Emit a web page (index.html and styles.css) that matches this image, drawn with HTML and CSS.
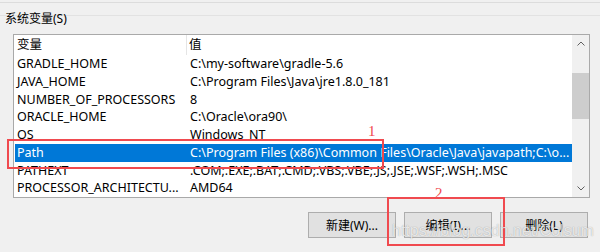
FILE: index.html
```html
<!DOCTYPE html>
<html lang="zh-CN">
<head>
    <meta charset="UTF-8">
    <title>系统变量</title>
    <link rel="stylesheet" href="styles.css">
</head>
<body>
    <div class="window">
        <div class="group">
            <div class="group-title">系统变量(S)</div>

            <div class="listbox">
                <div class="list">
                    <div class="row head">
                        <div class="cell name">变量</div>
                        <div class="cell value">值</div>
                    </div>
                    <div class="row">
                        <div class="cell name">GRADLE_HOME</div>
                        <div class="cell value">C:\my-software\gradle-5.6</div>
                    </div>
                    <div class="row">
                        <div class="cell name">JAVA_HOME</div>
                        <div class="cell value">C:\Program Files\Java\jre1.8.0_181</div>
                    </div>
                    <div class="row">
                        <div class="cell name">NUMBER_OF_PROCESSORS</div>
                        <div class="cell value">8</div>
                    </div>
                    <div class="row">
                        <div class="cell name">ORACLE_HOME</div>
                        <div class="cell value">C:\Oracle\ora90\</div>
                    </div>
                    <div class="row">
                        <div class="cell name">OS</div>
                        <div class="cell value">Windows_NT</div>
                    </div>
                    <div class="row selected">
                        <div class="cell name">Path</div>
                        <div class="cell value">C:\Program Files (x86)\Common Files\Oracle\Java\javapath;C:\o...</div>
                    </div>
                    <div class="row">
                        <div class="cell name">PATHEXT</div>
                        <div class="cell value">.COM;.EXE;.BAT;.CMD;.VBS;.VBE;.JS;.JSE;.WSF;.WSH;.MSC</div>
                    </div>
                    <div class="row">
                        <div class="cell name">PROCESSOR_ARCHITECTU...</div>
                        <div class="cell value">AMD64</div>
                    </div>
                </div>

                <div class="scrollbar">
                    <div class="scroll-btn">
                        <svg width="8" height="5" viewBox="0 0 8 5"><path d="M0.5 4.5 L4 1 L7.5 4.5" fill="none" stroke="#606060" stroke-width="1"/></svg>
                    </div>
                    <div class="scroll-track">
                        <div class="scroll-thumb"></div>
                    </div>
                    <div class="scroll-btn">
                        <svg width="8" height="5" viewBox="0 0 8 5"><path d="M0.5 0.5 L4 4 L7.5 0.5" fill="none" stroke="#606060" stroke-width="1"/></svg>
                    </div>
                </div>
            </div>

            <div class="buttons">
                <button class="btn">新建(W)...</button>
                <button class="btn">编辑(I)...</button>
                <button class="btn">删除(L)</button>
            </div>
        </div>

        <!-- annotations drawn over the screenshot -->
        <div class="mark mark-1"><span class="mark-num">1</span></div>
        <div class="mark mark-2"><span class="mark-num">2</span></div>
        <div class="watermark">https://blog.csdn.net/Colsum</div>
    </div>
</body>
</html>
```

FILE: styles.css
```css
html, body {
    margin: 0;
    padding: 0;
}
body {
    background: #f0f0f0;
    font-family: "Noto Sans", "Noto Sans CJK SC", sans-serif;
    font-size: 12.5px;
    color: #000;
}
.window {
    position: relative;
    width: 600px;
    height: 252px;
    overflow: hidden;
    padding-top: 2px;
    box-sizing: border-box;
}
.group {
    border-top: 1px solid #dcdcdc;
}
.group-title {
    margin-top: 12px;
    border-top: 1px solid #e2e2e2;
    padding-left: 5px;
    height: 18px;
    line-height: 6px;
    font-size: 12px;
}
.listbox {
    display: flex;
    margin-left: 13px;
    width: 575px;
    height: 162px;
    border: 1px solid #a9a9a9;
    background: white;
}
.list {
    flex: 1;
    padding-left: 1px;
    overflow: hidden;
}
.row {
    display: flex;
    height: 17.75px;
    line-height: 17.75px;
    white-space: nowrap;
}
.row.head {
    height: 20px;
    line-height: 20px;
}
.row.head .name {
    border-right: 1px solid #e5e5e5;
    width: 169px;
}
.row.selected {
    background: #0078d7;
    color: white;
}
.cell {
    padding-left: 2px;
    overflow: hidden;
}
.name {
    width: 171px;
    flex-shrink: 0;
}
.value {
    flex: 1;
}
.scrollbar {
    width: 17px;
    display: flex;
    flex-direction: column;
    background: #f0f0f0;
}
.scroll-btn {
    height: 17px;
    display: flex;
    align-items: center;
    justify-content: center;
}
.scroll-track {
    flex: 1;
    padding-top: 21px;
}
.scroll-thumb {
    height: 46px;
    background: #cdcdcd;
}
.buttons {
    display: flex;
    justify-content: flex-end;
    gap: 8px;
    margin-top: 14px;
    padding-right: 12px;
}
.btn {
    width: 88px;
    height: 26px;
    background: #e1e1e1;
    border: 1px solid #adadad;
    font-family: "Noto Sans", "Noto Sans CJK SC", sans-serif;
    font-size: 12px;
    color: #000;
    padding: 0;
}
.mark {
    position: absolute;
    border: 2px solid #f04a4f;
}
.mark-1 {
    left: 7px;
    top: 139px;
    width: 373px;
    height: 26px;
}
.mark-2 {
    left: 387px;
    top: 197px;
    width: 114px;
    height: 45px;
}
.mark-num {
    position: absolute;
    font-family: "Liberation Serif", serif;
    font-size: 15px;
    line-height: 15px;
    color: #f04a4f;
}
.mark-1 .mark-num {
    left: 359px;
    top: -17px;
}
.mark-2 .mark-num {
    left: 46px;
    top: -13px;
}
.watermark {
    position: absolute;
    left: 392px;
    top: 222px;
    font-family: "Liberation Sans", sans-serif;
    font-size: 16px;
    color: rgba(255, 255, 255, 0.75);
    text-shadow: 0 0 1px rgba(0, 0, 0, 0.35);
}
```
